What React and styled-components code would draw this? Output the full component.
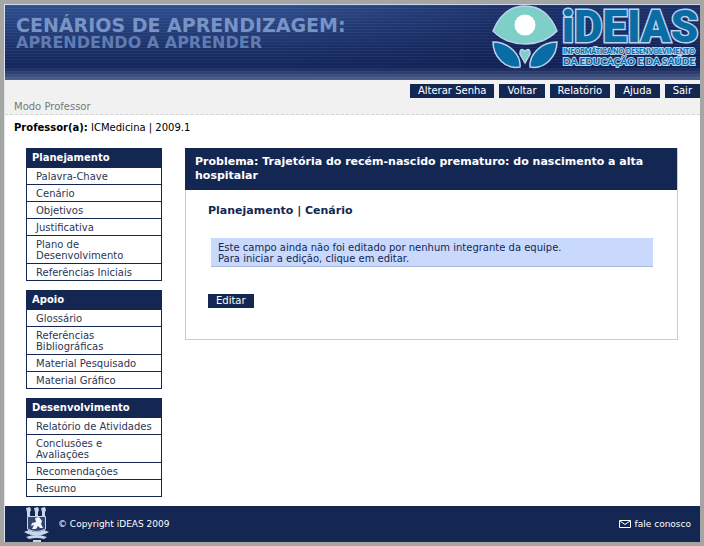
import React from "react";
import styled, { createGlobalStyle, css } from "styled-components";

const navy = "#142752";

const Global = createGlobalStyle`
  * { box-sizing: border-box; }
  body {
    margin: 0;
    background: #a5a5a3;
    font-family: "DejaVu Sans", Verdana, sans-serif;
    font-size: 10px;
    line-height: 11px;
    color: ${navy};
  }
`;

const Page = styled.div`
  min-height: 100vh;
  border: 4px solid #a5a5a3;
`;

const Sheet = styled.div`
  min-height: calc(100vh - 8px);
  display: flex;
  flex-direction: column;
  background: #fff;
  border-left: 1px solid #dfe4ec;
`;

const Banner = styled.header`
  height: 76px;
  display: flex;
  justify-content: space-between;
  padding-left: 11px;
  border-top: 1px solid #ccd6ea;
  background:
    repeating-linear-gradient(rgba(255, 255, 255, 0.05) 0 1px, transparent 1px 3px),
    linear-gradient(transparent 62px, rgba(120, 138, 178, 0.6) 75px),
    linear-gradient(90deg, transparent 40%, rgba(16, 28, 80, 0.6) 75%),
    linear-gradient(#2f4f8e, #12265b 60px);
`;

const Titles = styled.div`
  padding-top: 10px;
  color: #7893c6;
`;

const Title = styled.h1`
  margin: 0;
  font-size: 19px;
  line-height: 20px;
`;

const Subtitle = styled.p`
  margin: 0;
  font-size: 16px;
  line-height: 16px;
  font-weight: bold;
  color: #607cb2;
`;

const LogoSvg = styled.svg`
  flex: none;
  width: 208px;
  height: 72px;
  overflow: visible;
`;

const TopBar = styled.div`
  height: 35px;
  display: flex;
  justify-content: space-between;
  background: #f1f1f1;
  border-bottom: 1px dashed #d4d4d4;
`;

const Mode = styled.span`
  align-self: flex-end;
  padding: 0 0 2px 9px;
  color: #777;
`;

const TopNav = styled.nav`
  display: flex;
  gap: 5px;
  padding-top: 4px;
`;

const buttonLook = css`
  height: 14px;
  padding: 0 8px;
  border: 0;
  background: ${navy};
  color: #fff;
  font: inherit;
  line-height: 14px;
`;

const NavButton = styled.button`
  ${buttonLook}
`;

const EditButton = styled.button`
  ${buttonLook}
  margin-top: 27px;
`;

const UserLine = styled.p`
  margin: 0;
  padding: 7px 9px 15px;
  color: #000;
`;

const Columns = styled.div`
  flex: 1;
  display: flex;
  align-items: flex-start;
  gap: 23px;
  padding: 0 22px 9px 21px;
`;

const Sidebar = styled.aside`
  flex: none;
  width: 136px;
  display: grid;
  gap: 9px;
`;

const Menu = styled.nav`
  border: 1px solid ${navy};
`;

const MenuTitle = styled.h2`
  margin: 0;
  padding: 2px 5px 3px;
  background: ${navy};
  color: #fff;
  font-size: 10px;
  line-height: 14px;
`;

const MenuList = styled.ul`
  margin: 0;
  padding: 0;
  list-style: none;
`;

const MenuItem = styled.li`
  padding: 3px 8px 2px 9px;
  & + & { border-top: 1px solid ${navy}; }
`;

const MenuLink = styled.a`
  display: block;
  color: #2c3655;
  text-decoration: none;
`;

const Panel = styled.main`
  flex: 1;
  min-width: 0;
  border: 1px solid #ccc;
  border-top: 0;
`;

const PanelTitle = styled.h2`
  margin: 0 0 0 -1px;
  padding: 7px 10px;
  background: ${navy};
  color: #fff;
  font-size: 11px;
  line-height: 14px;
`;

const PanelBody = styled.div`
  padding: 14px 24px 31px 22px;
`;

const Section = styled.h3`
  margin: 0 0 20px;
  font-size: 11px;
  line-height: 14px;
`;

const Notice = styled.p`
  margin: 0 0 0 3px;
  padding: 4px 7px 2px;
  background: #c8d9fd;
  border-bottom: 1px solid #a9b8d6;
`;

const Footer = styled.footer`
  height: 36px;
  display: flex;
  align-items: center;
  gap: 9px;
  padding: 0 9px 0 19px;
  background: ${navy};
  color: #fff;
  font-size: 9px;
`;

const Contact = styled.a`
  display: flex;
  align-items: center;
  gap: 4px;
  margin-left: auto;
  color: inherit;
  text-decoration: none;
`;

const menus = [
  ["Planejamento", ["Palavra-Chave", "Cenário", "Objetivos", "Justificativa", "Plano de Desenvolvimento", "Referências Iniciais"]],
  ["Apoio", ["Glossário", "Referências Bibliográficas", "Material Pesquisado", "Material Gráfico"]],
  ["Desenvolvimento", ["Relatório de Atividades", "Conclusões e Avaliações", "Recomendações", "Resumo"]],
];

const actions = ["Alterar Senha", "Voltar", "Relatório", "Ajuda", "Sair"];

function Logo() {
  return (
    <LogoSvg viewBox="0 0 208 72" role="img" aria-label="iDEIAS">
      <g stroke="#b9d3ee" strokeWidth="1.5">
        <path d="M1 26Q11 1 33 1T65 26Q52 39 33 39T1 26Z" fill="#7fcfc9" />
        <circle cx="33" cy="20" r="10.500" fill="#fff" stroke="none" />
        <path d="M1 37Q13 37 21 45T28 62Q17 64 9 56T1 37Z" fill="#0a6ca4" />
        <path d="M65 37Q53 37 45 45T38 62Q49 64 57 56T65 37Z" fill="#0a6ca4" />
        <path d="M33 58L28 49Q28 42 33 46Q38 42 38 49Z" fill="#7fcfc9" />
      </g>
      <g fill="#0a6ca4" stroke="#b9d3ee" paintOrder="stroke" fontFamily="Roboto, sans-serif" fontWeight="900">
        <text x="70" y="37" fontSize="44" strokeWidth="3">iDEIAS</text>
        <g strokeWidth="2" fontFamily="Lato, sans-serif">
          <text x="71" y="49" fontSize="7">INFORMÁTICA NO DESENVOLVIMENTO</text>
          <text x="71" y="60" fontSize="10">DA EDUCAÇÃO E DA SAÚDE</text>
        </g>
      </g>
    </LogoSvg>
  );
}

function Crest() {
  return (
    <svg width="25" height="36" viewBox="0 0 25 36" aria-hidden="true">
      <g fill="#c9d6ea">
        <path d="M2 2l4-1 1 3-1 2H3zM10 2l4-1 1 3-1 2h-3zM17 2l4-1 1 3-1 2h-3z" />
        <path d="M3 6h3v4H3zM11 6h3v4h-3zM18 6h3v4h-3z" />
        <path d="M0 26l5-2q7 4 15 0l5 2-4 2q-8 3-17 0zM2 31q10-4 21 0l-3 2q-7-2-15 0zM9 34h8v2H9z" />
      </g>
      <path d="M3.500 10.500h18V23q-9 5-18 0z" fill="#33466f" stroke="#c9d6ea" />
      <path d="M11 12l4-1 3 4-1 3 2 4h-3l-2-2-2 3H8l2-4-3 1 1-3 4-1z" fill="#f2f6fc" />
    </svg>
  );
}

export default function App() {
  return (
    <Page>
      <Global />
      <Sheet>
        <Banner>
          <Titles>
            <Title>CENÁRIOS DE APRENDIZAGEM:</Title>
            <Subtitle>APRENDENDO A APRENDER</Subtitle>
          </Titles>
          <Logo />
        </Banner>
        <TopBar>
          <Mode>Modo Professor</Mode>
          <TopNav>
            {actions.map((a) => <NavButton key={a} type="button">{a}</NavButton>)}
          </TopNav>
        </TopBar>
        <UserLine><strong>Professor(a):</strong> ICMedicina | 2009.1</UserLine>
        <Columns>
          <Sidebar>
            {menus.map(([title, items]) => (
              <Menu key={title} aria-label={title}>
                <MenuTitle>{title}</MenuTitle>
                <MenuList>
                  {items.map((i) => (
                    <MenuItem key={i}><MenuLink href="#">{i}</MenuLink></MenuItem>
                  ))}
                </MenuList>
              </Menu>
            ))}
          </Sidebar>
          <Panel>
            <PanelTitle>Problema: Trajetória do recém-nascido prematuro: do nascimento a alta hospitalar</PanelTitle>
            <PanelBody>
              <Section>Planejamento | Cenário</Section>
              <Notice>
                Este campo ainda não foi editado por nenhum integrante da equipe.
                <br />
                Para iniciar a edição, clique em editar.
              </Notice>
              <EditButton type="button">Editar</EditButton>
            </PanelBody>
          </Panel>
        </Columns>
        <Footer>
          <Crest />
          <span>© Copyright iDEAS 2009</span>
          <Contact href="#">
            <svg width="12" height="8" viewBox="0 0 12 8" fill="none" stroke="#fff" aria-hidden="true">
              <path d="M.5.5h11v7H.5zM1 1l5 3.500L11 1" />
            </svg>
            fale conosco
          </Contact>
        </Footer>
      </Sheet>
    </Page>
  );
}
